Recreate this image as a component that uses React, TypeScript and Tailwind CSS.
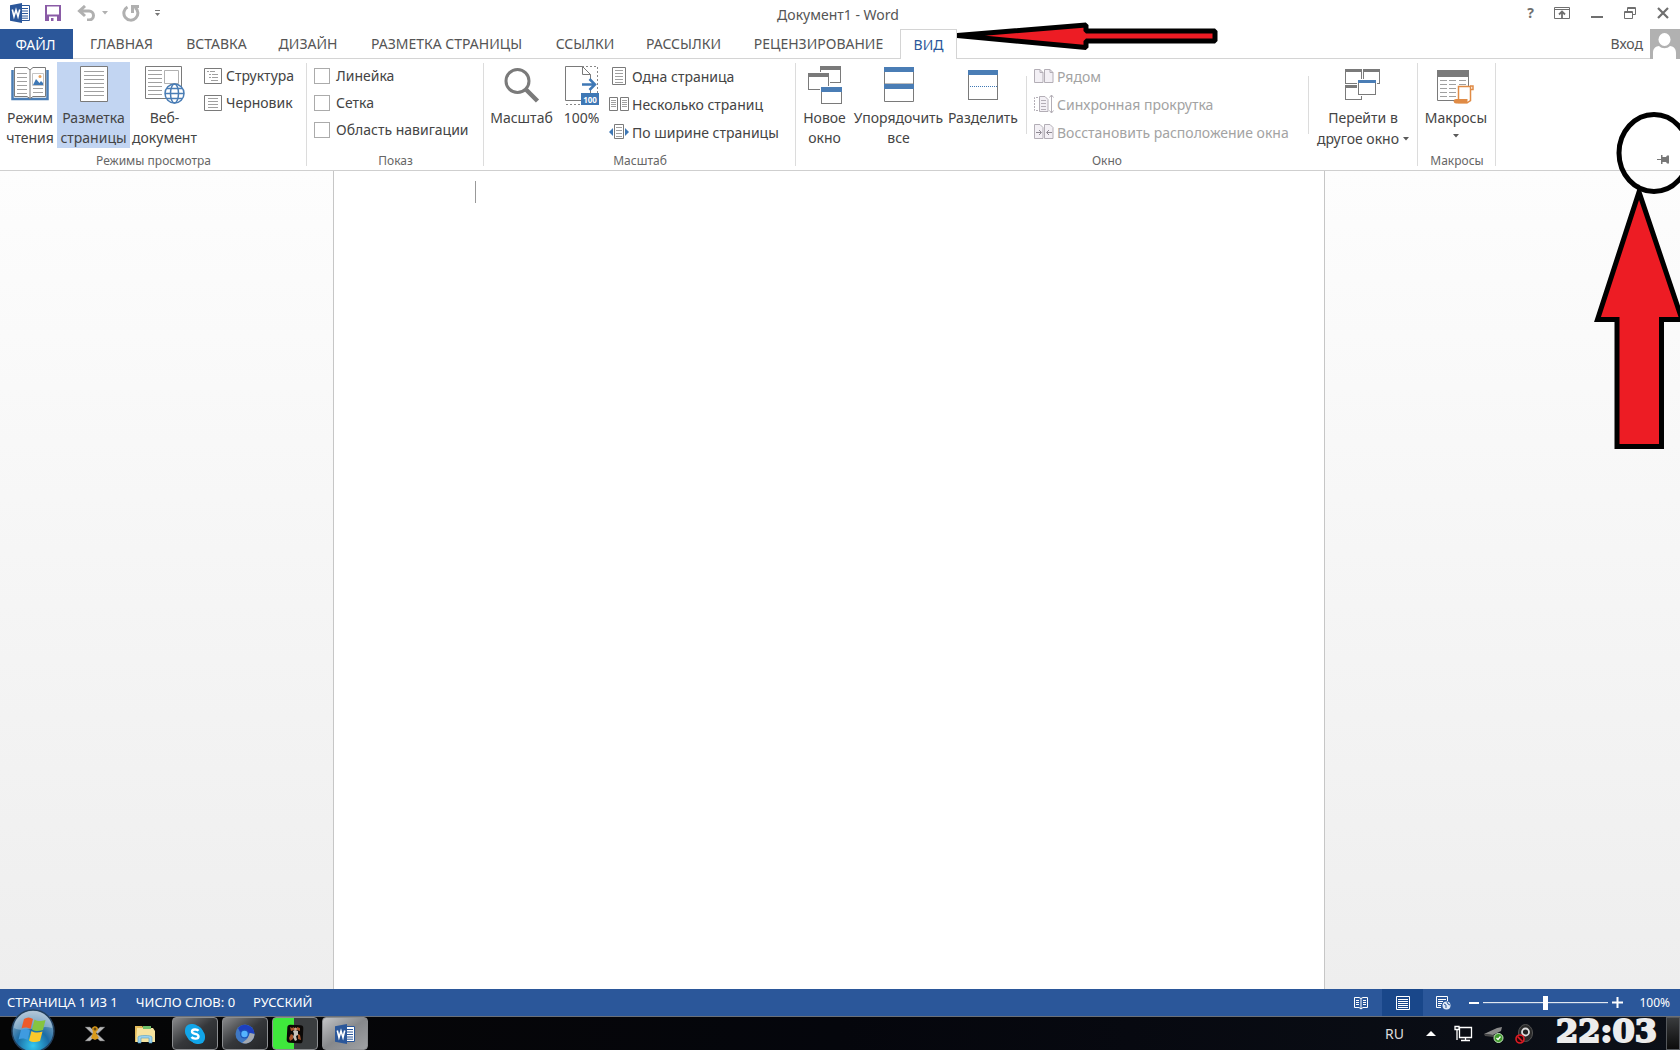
import type { ReactNode } from 'react';

const GRAY = '#7a7a7a';
const BLUE = '#4a7db5';

function Lines({ x, y, w, n, step = 4, color = '#a0a0a0' }: { x: number; y: number; w: number; n: number; step?: number; color?: string }) {
  return (
    <>
      {Array.from({ length: n }, (_, i) => (
        <path key={i} d={`M${x} ${y + i * step + 0.5}h${w}`} stroke={color} />
      ))}
    </>
  );
}

function WordLogo({ size }: { size: number }) {
  return (
    <svg width={size} height={size} viewBox="0 0 20 20" aria-hidden="true">
      <path d="M10 2.5h9.5v15H10z" fill="#fff" stroke="#2b579a" />
      <path d="M11 5.5h7M11 8h7M11 10.5h7M11 13h7M11 15.2h7" stroke="#2b579a" />
      <path d="M0 2.2 12 0v20L0 17.8z" fill="#2b579a" />
      <path d="M2.3 6.5 4 13.5 6 7l2 6.5 1.7-7" fill="none" stroke="#fff" strokeWidth="1.6" />
    </svg>
  );
}

function Caret({ color = '#5a5a5a' }: { color?: string }) {
  return (
    <svg width="6" height="4" viewBox="0 0 6 4" className="inline-block" aria-hidden="true">
      <path d="M0 0h6L3 3.6z" fill={color} />
    </svg>
  );
}

/* ---------- large ribbon icons ---------- */

const ReadIcon = (
  <svg width="38" height="36" viewBox="0 0 38 36" fill="none">
    <path d="M1.500 4v29h35V4" stroke="#4a7db5" strokeWidth="2.500" />
    <path d="M3.500 1.500H16l3 2.500 3-2.500h12.500v29H22l-3 2-3-2H3.500z" fill="#fff" stroke={GRAY} />
    <path d="M19 4v28" stroke={GRAY} />
    <Lines x={6} y={7} w={10} n={6} />
    <path d="M22 22.500h10M22 26.500h10" stroke="#a0a0a0" />
    <path d="M21.500 7.500h11v12h-11z" fill="#fff" stroke="#c4c4c4" />
    <path d="m22 19 3-6 3.500 4 1.500-2 2 2v2z" fill="#3f78b5" />
    <circle cx="29" cy="10.500" r="1.500" fill="#e8a25c" />
  </svg>
);

const PageIcon = (
  <svg width="28" height="36" viewBox="0 0 28 36" fill="none">
    <path d="M.5.5h27v35H.5z" fill="#fff" stroke={GRAY} />
    <Lines x={4} y={5} w={20} n={7} />
  </svg>
);

const WebIcon = (
  <svg width="40" height="38" viewBox="0 0 40 38" fill="none">
    <path d="M.5.5h36v32H.5z" fill="#fff" stroke={GRAY} />
    <Lines x={3} y={4} w={14} n={7} />
    <path d="M19.500 4.500h14v13h-14z" stroke="#b0b0b0" />
    <circle cx="29.500" cy="27.500" r="9.500" fill="#fff" stroke={BLUE} strokeWidth="1.500" />
    <ellipse cx="29.500" cy="27.500" rx="4" ry="9.500" stroke={BLUE} strokeWidth="1.500" />
    <path d="M20 27.500h19M22 22.500h15M22 32.500h15" stroke={BLUE} strokeWidth="1.300" />
  </svg>
);

const ZoomIcon = (
  <svg width="36" height="38" viewBox="0 0 36 38" fill="none" stroke={GRAY}>
    <circle cx="13.500" cy="15" r="11.500" strokeWidth="3" />
    <path d="m21.500 23 12 12" strokeWidth="4.500" />
  </svg>
);

const HundredIcon = (
  <svg width="34" height="40" viewBox="0 0 34 40" fill="none">
    <path d="M1 38.500h16M17 .5h15.500v28" stroke="#888" strokeDasharray="2 2" />
    <path d="M.5 34.500V.5h17l8 8v26z" fill="#fff" stroke={GRAY} />
    <path d="M17.500.500v8h8" stroke={GRAY} />
    <path d="M24 13h5v11h-5z" fill="#fff" />
    <path d="M17 18.500h12M24.500 13l5.500 5.500-5.500 5.500" stroke="#3f78b5" strokeWidth="2.500" />
    <path d="M16 27h18v12H16z" fill="#3f78b5" />
    <text x="25" y="36.500" fill="#fff" fontSize="8" fontWeight="700" textAnchor="middle" fontFamily="Noto Sans">100</text>
  </svg>
);

function Win({ x, y, w, h, color = GRAY, bar = 4 }: { x: number; y: number; w: number; h: number; color?: string; bar?: number }) {
  return (
    <>
      <rect x={x - 1} y={y - 1} width={w + 2} height={h + 2} fill="#fff" />
      <rect x={x + 0.5} y={y + 0.5} width={w - 1} height={h - 1} fill="#fff" stroke={GRAY} />
      <rect x={x} y={y} width={w} height={bar} fill={color} />
    </>
  );
}

const NewWindowIcon = (
  <svg width="34" height="38" viewBox="0 0 34 38">
    <Win x={12} y={0} w={21} h={17} />
    <Win x={0} y={7} w={21} h={17} />
    <Win x={13} y={21} w={21} h={17} color={BLUE} bar={5} />
  </svg>
);

const ArrangeIcon = (
  <svg width="30" height="38" viewBox="0 0 30 38">
    <Win x={0} y={1} w={30} h={18} color={BLUE} bar={5} />
    <path d="M.5 18h29v17.500H.5z" fill="#fff" stroke={GRAY} />
    <path d="M0 18h30v5H0z" fill={BLUE} />
  </svg>
);

const SplitIcon = (
  <svg width="30" height="36" viewBox="0 0 30 36">
    <Win x={0} y={4} w={30} h={30} color={BLUE} bar={5} />
    <path d="M2 20.500h27" stroke="#3f78b5" strokeDasharray="1 1" />
  </svg>
);

const SwitchIcon = (
  <svg width="36" height="36" viewBox="0 0 36 36">
    <Win x={0} y={3} w={17} h={15} bar={3} />
    <Win x={18} y={3} w={17} h={15} bar={3} />
    <Win x={0} y={19} w={17} h={15} bar={3} />
    <Win x={13} y={14} w={18} h={15} color={BLUE} bar={3} />
  </svg>
);

const MacroIcon = (
  <svg width="38" height="38" viewBox="0 0 38 38" fill="none">
    <path d="M.5 4.500h31v30H.5z" fill="#fff" stroke={GRAY} />
    <path d="M0 4h32v7H0z" fill={GRAY} />
    {[3, 12, 22].map((x) => (
      <Lines key={x} x={x} y={14} w={7} n={5} />
    ))}
    <path d="M21.500 20.500h12v14l-3 2H21.500z" fill="#fff" stroke="#e08b45" strokeWidth="1.500" />
    <path d="M33 20h3v3.500h-2.500" stroke="#e08b45" strokeWidth="1.500" />
    <path d="M19 33h11.500v4.500H19a2 2 0 0 1 0-4.500z" fill="#e08b45" />
  </svg>
);

/* ---------- small ribbon icons ---------- */

const OutlineIcon = (
  <svg width="18" height="16" viewBox="0 0 18 16" fill="none">
    <path d="M.5.5h17v15H.5z" stroke={GRAY} />
    <path d="M3 3.500h2m1 0h5M5 6.500h2m1 0h6M5 9.500h2m1 0h6M7 12.500h7" stroke="#a0a0a0" />
  </svg>
);

const DraftIcon = (
  <svg width="18" height="16" viewBox="0 0 18 16" fill="none">
    <path d="M.5.5h17v15H.5z" stroke={GRAY} />
    <Lines x={4} y={3} w={10} n={4} step={3} />
  </svg>
);

const OnePageIcon = (
  <svg width="20" height="18" viewBox="0 0 20 18" fill="none">
    <path d="M3.500.5h13v17h-13z" stroke={GRAY} />
    <Lines x={6} y={3} w={8} n={5} step={3} />
  </svg>
);

const MultiPageIcon = (
  <svg width="20" height="16" viewBox="0 0 20 16" fill="none">
    <path d="M.5 1.500h8v13h-8zM11.500 1.500h8v13h-8z" stroke={GRAY} />
    <Lines x={2} y={4} w={5} n={4} step={2} />
    <Lines x={13} y={4} w={5} n={4} step={2} />
  </svg>
);

const PageWidthIcon = (
  <svg width="20" height="16" viewBox="0 0 20 16" fill="none">
    <path d="M5.500.5h9v14h-9z" stroke={GRAY} />
    <Lines x={7} y={3} w={6} n={4} step={3} />
    <path d="M4 4v8L0 8zM16 4v8l4-4z" fill="#3f78b5" />
  </svg>
);

const SideBySideIcon = (
  <svg width="20" height="16" viewBox="0 0 20 16" fill="#f3f0f5" stroke="#b3aeb6">
    <path d="M.5 1.500H6l3 3v10H.5zM10.500 1.500H16l3 3v10h-8.500z" />
    <path d="M6 1.500v3h3M16 1.500v3h3" fill="none" />
  </svg>
);

const SyncScrollIcon = (
  <svg width="20" height="20" viewBox="0 0 20 20" fill="none" stroke="#b3aeb6">
    <path d="M4 3.500H.5v13H4" strokeDasharray="2 1" />
    <path d="M5.500 2.500H11l3 3v12H5.500z" fill="#f3f0f5" />
    <Lines x={7} y={6} w={5} n={4} step={3} color="#b3aeb6" />
    <path d="M17.500 1v18M15.500 3.500l2-2.500 2 2.500M15.500 16.500l2 2.500 2-2.500" />
  </svg>
);

const ResetIcon = (
  <svg width="20" height="16" viewBox="0 0 20 16" fill="#f3f0f5" stroke="#b3aeb6">
    <path d="M.5.5H6l3 3v11H.5zM10.500.5H16l3 3v11h-8.500z" />
    <path d="M2 8.500h5M5 6l2.500 2.500L5 11M18 8.500h-5M15 6l-2.500 2.500L15 11" fill="none" stroke="#8f8a93" />
  </svg>
);

/* ---------- ribbon parts ---------- */

function BigButton({ icon, lines, width, active, caret }: { icon: ReactNode; lines: string[]; width: string; active?: boolean; caret?: 'inline' | 'below' }) {
  return (
    <button className={`flex h-[86px] shrink-0 flex-col items-center ${width} ${active ? 'bg-[#c2d5f2]' : ''}`}>
      <span className="flex h-[46px] shrink-0 items-start justify-center pt-1">{icon}</span>
      {lines.map((line, i) => (
        <span key={line} className="h-5 shrink-0 whitespace-nowrap leading-5">
          {line}
          {caret === 'inline' && i === lines.length - 1 && <span className="pl-1 align-[1px]"><Caret /></span>}
        </span>
      ))}
      {caret === 'below' && <span className="flex h-4 items-center"><Caret /></span>}
    </button>
  );
}

function SmallButton({ icon, label, disabled, tall }: { icon: ReactNode; label: string; disabled?: boolean; tall?: boolean }) {
  return (
    <button disabled={disabled} className={`flex items-center whitespace-nowrap ${tall ? 'h-7 gap-[3px]' : 'h-[27px] gap-1'} ${disabled ? 'text-[#a3a3a3]' : ''}`}>
      <span className="flex">{icon}</span>
      {label}
    </button>
  );
}

function Group({ title, width, children }: { title: string; width: string; children: ReactNode }) {
  return (
    <section className={`relative flex shrink-0 flex-col justify-between pt-[3px] ${width}`}>
      <div className="flex">{children}</div>
      <h2 className="pb-px text-center text-[12px] leading-4 text-[#666]">{title}</h2>
      <span className="absolute right-0 top-1 bottom-1 w-px bg-[#dcdcdc]" />
    </section>
  );
}

const tabs = [
  { label: 'ГЛАВНАЯ', width: 'w-[97px]' },
  { label: 'ВСТАВКА', width: 'w-[93px]' },
  { label: 'ДИЗАЙН', width: 'w-[90px]' },
  { label: 'РАЗМЕТКА СТРАНИЦЫ', width: 'w-[187px]' },
  { label: 'ССЫЛКИ', width: 'w-[90px]' },
  { label: 'РАССЫЛКИ', width: 'w-[107px]' },
  { label: 'РЕЦЕНЗИРОВАНИЕ', width: 'w-[163px]' },
];

function TitleBar() {
  return (
    <header className="grid h-[29px] grid-cols-[1fr_auto_1fr] items-center">
      <div className="flex items-center pl-2.5 pb-1">
        <WordLogo size={20} />
        <button aria-label="Сохранить" className="ml-[15px]">
          <svg width="16" height="16" viewBox="0 0 16 16">
            <path d="M0 0h16v16H0z" fill="#8a5ba6" />
            <path d="M2 1.500h12v8H2zM4 11.500h8V16H4z" fill="#fff" />
            <path d="M6 13h2.500v3H6z" fill="#8a5ba6" />
          </svg>
        </button>
        <button aria-label="Отменить" className="ml-4 flex items-center gap-1.5">
          <svg width="19" height="16" viewBox="0 0 19 16" fill="none" stroke="#b0b0b0" strokeWidth="3">
            <path d="M8 1 2.500 6 8 11M3 6h9a4.500 4.500 0 0 1 0 9h-2" />
          </svg>
          <Caret color="#b0b0b0" />
        </button>
        <button aria-label="Повторить" className="ml-3.5">
          <svg width="18" height="18" viewBox="0 0 18 18" fill="none" stroke="#b0b0b0" strokeWidth="3">
            <path d="M5.500 3a7 7 0 1 0 7.500.5" />
            <path d="M10.500 9V2.500H17" />
          </svg>
        </button>
        <button aria-label="Настройка панели" className="ml-3.5">
          <svg width="7" height="8" viewBox="0 0 7 8" fill="#777">
            <path d="M1 1h5v1H1zM1 4h5L3.500 7z" />
          </svg>
        </button>
      </div>
      <h1 className="pr-1 text-[14px] leading-5 text-[#555]">Документ1 - Word</h1>
      <div className="flex items-center justify-end gap-[21px] pr-[11px] pb-[3px] text-[#6f6f6f]">
        <div className="flex items-center gap-5">
          <button aria-label="Справка" className="text-[14px] font-bold leading-5">?</button>
          <button aria-label="Параметры ленты">
            <svg width="16" height="12" viewBox="0 0 16 12" fill="none" stroke="currentColor">
              <path d="M.5.5h15v11H.5zM0 2.500h16" />
              <path d="M8 11V5M5 7.500 8 4.500l3 3" strokeWidth="1.800" />
            </svg>
          </button>
        </div>
        <button aria-label="Свернуть">
          <svg width="12" height="12" viewBox="0 0 12 12"><path d="M0 9h12v2H0z" fill="currentColor" /></svg>
        </button>
        <button aria-label="Восстановить">
          <svg width="12" height="12" viewBox="0 0 12 12" fill="none" stroke="currentColor">
            <path d="M3.500 4V.5h8v7H9M3 1.500h9M.5 4.500h8v7h-8zM0 5.500h9" />
          </svg>
        </button>
        <button aria-label="Закрыть">
          <svg width="12" height="12" viewBox="0 0 12 12" stroke="currentColor" strokeWidth="2.200"><path d="m1 1 10 10M11 1 1 11" /></svg>
        </button>
      </div>
    </header>
  );
}

function TabRow() {
  return (
    <nav className="flex h-[30px] text-[14px] text-[#555]">
      <button className="w-[73px] bg-[#2b579a] pr-0.5 text-white">ФАЙЛ</button>
      <div className="flex border-b border-[#d4d4d4]">
        {tabs.map((t) => (
          <button key={t.label} className={`whitespace-nowrap ${t.width}`}>{t.label}</button>
        ))}
      </div>
      <div className="relative">
        <button className="h-full w-[57px] border-x border-t border-[#d4d4d4] text-[#2b579a]">ВИД</button>
        <svg width="262" height="28" viewBox="0 0 262 28" className="absolute left-full -top-[7px] z-10" aria-hidden="true">
          <path d="M-1 13.500 129 3v6h129v10H129v6.500z" fill="#ed1c24" stroke="#000" strokeWidth="5" strokeLinejoin="bevel" />
        </svg>
      </div>
      <div className="flex flex-1 items-center justify-end border-b border-[#d4d4d4]">
        <button>Вход</button>
      </div>
      <svg width="37" height="30" viewBox="0 0 37 30" aria-hidden="true">
        <path d="M0 29.500h7" stroke="#d4d4d4" />
        <path d="M7 0h30v30H7z" fill="#b1b1b1" />
        <ellipse cx="21.500" cy="10.500" rx="6" ry="6.500" fill="#fff" />
        <path d="M10 30V24c0-5 3-6.500 6-7 3 3 8 3 11 0 3 .5 6 2 6 7v6z" fill="#fff" />
      </svg>
    </nav>
  );
}

function Ribbon() {
  return (
    <div className="flex h-28 border-b border-[#cfcfcf] text-[14px] text-[#444]">
      <Group title="Режимы просмотра" width="w-[307px]">
        <BigButton icon={ReadIcon} lines={['Режим', 'чтения']} width="w-[57px] pl-[3px]" />
        <BigButton icon={PageIcon} lines={['Разметка', 'страницы']} width="w-[73px]" active />
        <BigButton icon={WebIcon} lines={['Веб-', 'документ']} width="w-[69px]" />
        <div className="pl-[5px]">
          <SmallButton icon={OutlineIcon} label="Структура" />
          <SmallButton icon={DraftIcon} label="Черновик" />
        </div>
      </Group>
      <Group title="Показ" width="w-[177px]">
        <div className="pl-[7px]">
          {['Линейка', 'Сетка', 'Область навигации'].map((label) => (
            <label key={label} className="flex h-[27px] items-center gap-1.5 whitespace-nowrap">
              <input type="checkbox" className="size-4 appearance-none border border-[#ababab] bg-white" />
              {label}
            </label>
          ))}
        </div>
      </Group>
      <Group title="Масштаб" width="w-[312px]">
        <BigButton icon={ZoomIcon} lines={['Масштаб']} width="w-[75px]" />
        <BigButton icon={HundredIcon} lines={['100%']} width="w-[45px]" />
        <div className="pl-[5px]">
          <SmallButton tall icon={OnePageIcon} label="Одна страница" />
          <SmallButton tall icon={MultiPageIcon} label="Несколько страниц" />
          <SmallButton tall icon={PageWidthIcon} label="По ширине страницы" />
        </div>
      </Group>
      <Group title="Окно" width="w-[622px]">
        <BigButton icon={NewWindowIcon} lines={['Новое', 'окно']} width="w-[57px]" />
        <BigButton icon={ArrangeIcon} lines={['Упорядочить', 'все']} width="w-[91px]" />
        <BigButton icon={SplitIcon} lines={['Разделить']} width="w-[78px]" />
        <div className="my-3.5 ml-1 w-[283px] border-x border-[#dcdcdc] pl-[7px]">
          <div className="-my-3.5">
            <SmallButton tall disabled icon={SideBySideIcon} label="Рядом" />
            <SmallButton tall disabled icon={SyncScrollIcon} label="Синхронная прокрутка" />
            <SmallButton tall disabled icon={ResetIcon} label="Восстановить расположение окна" />
          </div>
        </div>
        <BigButton icon={SwitchIcon} lines={['Перейти в', 'другое окно']} width="w-[108px]" caret="inline" />
      </Group>
      <Group title="Макросы" width="w-[78px]">
        <BigButton icon={MacroIcon} lines={['Макросы']} width="w-[76px]" caret="below" />
      </Group>
      <button aria-label="Закрепить ленту" className="ml-auto self-end pr-[11px] pb-1.5">
        <svg width="12" height="9" viewBox="0 0 12 9" fill="#777">
          <path d="M0 4h4v1H0zM4 0h1.500v2H9l1-1.500h2v8h-2L9 7H5.500v2H4z" />
        </svg>
      </button>
    </div>
  );
}

function StatusBar() {
  return (
    <footer className="flex h-[27px] items-center bg-[#2b579a] text-[13px] text-white">
      <div className="flex gap-[18px] pl-[7px]">
        <span>СТРАНИЦА 1 ИЗ 1</span>
        <span>ЧИСЛО СЛОВ: 0</span>
        <span>РУССКИЙ</span>
      </div>
      <div className="ml-auto flex h-full items-center">
        <button aria-label="Режим чтения" className="px-3.5">
          <svg width="14" height="14" viewBox="0 0 14 14" fill="none" stroke="#fff">
            <path d="M.5 1.500H5l2 1 2-1h4.500v10H9l-2 1.500-2-1.500H.5zM7 2v11M2 4.500h3M2 6.500h3M2 8.500h3M9 4.500h3M9 6.500h3M9 8.500h3" />
          </svg>
        </button>
        <button aria-label="Разметка страницы" className="flex h-full w-[41px] items-center justify-center bg-[#19478a]">
          <svg width="14" height="14" viewBox="0 0 14 14" fill="none" stroke="#fff">
            <path d="M.5.5h13v13H.5zM2 3.500h10M2 5.500h10M2 7.500h10M2 9.500h10M2 11.500h10" />
          </svg>
        </button>
        <button aria-label="Веб-документ" className="pl-[13px] pr-[18px]">
          <svg width="15" height="14" viewBox="0 0 15 14" fill="none" stroke="#fff">
            <path d="M5 11.500H.5V.5h11V5M2 3.500h8M2 5.500h5M2 7.500h4M2 9.500h3" />
            <circle cx="10.500" cy="9.500" r="4" fill="#dfe8f5" stroke="none" />
            <path d="m8 8 2 1v3M11 6l1 2 2 1" stroke="#2b579a" />
          </svg>
        </button>
        <button aria-label="Уменьшить">
          <svg width="10" height="10" viewBox="0 0 10 10"><path d="M0 4h10v2H0z" fill="#fff" /></svg>
        </button>
        <input
          type="range"
          aria-label="Масштаб"
          defaultValue={50}
          className="mx-1 h-3.5 w-[125px] appearance-none bg-linear-to-b from-transparent from-45% via-white via-45% to-transparent to-55% [&::-webkit-slider-thumb]:h-3.5 [&::-webkit-slider-thumb]:w-[5px] [&::-webkit-slider-thumb]:appearance-none [&::-webkit-slider-thumb]:bg-white"
        />
        <button aria-label="Увеличить">
          <svg width="11" height="11" viewBox="0 0 11 11"><path d="M0 4.500h11v2H0zM4.500 0h2v11h-2z" fill="#fff" /></svg>
        </button>
        <span className="w-[57px] pr-2.5 text-right text-[12px]">100%</span>
      </div>
    </footer>
  );
}

function TaskButton({ label, look, children }: { label: string; look: string; children: ReactNode }) {
  return (
    <button aria-label={label} className={`flex h-full w-[46px] items-center justify-center rounded-sm border border-[#8b8d90] ${look}`}>
      {children}
    </button>
  );
}

function TaskBar() {
  return (
    <div className="flex h-[34px] items-center border-t border-[#6b7078] bg-linear-to-r from-[#050505] via-[#05060c] to-[#0c1018]">
      <button aria-label="Пуск" className="relative z-10 -mt-2 ml-[11px]">
        <svg width="44" height="42" viewBox="0 0 44 42">
          <defs>
            <radialGradient id="orb" cx="50%" cy="85%" r="85%">
              <stop offset="0" stopColor="#35c8f0" />
              <stop offset=".45" stopColor="#1b6ca5" />
              <stop offset="1" stopColor="#9bb3c8" />
            </radialGradient>
          </defs>
          <circle cx="22" cy="22" r="21" fill="url(#orb)" stroke="#23405e" strokeWidth="1.500" />
          <path d="M3 19a19 17 0 0 1 38 0c-12-4-26 6-38 0z" fill="#fff" opacity=".3" />
          <path d="M13 10c3-2 6-2 9 0l-2.500 10c-3-2-6-2-9-.5z" fill="#ee5a28" />
          <path d="M23.500 10.500c3 2 6 2 11 .5l-2.500 10c-4 1.500-8 1.500-11-.5z" fill="#86c440" />
          <path d="M10 21c3-1.500 6-1.500 9 .5L16.500 31c-3-2-6-2-9-.5z" fill="#3f9be0" />
          <path d="M20.500 22c3 2 7 2 11 .5L29 32c-4 1.500-8 1.500-11-.5z" fill="#fbc92b" />
        </svg>
      </button>
      <button aria-label="Игра" className="ml-[29px]">
        <svg width="22" height="20" viewBox="0 0 22 20" fill="none">
          <path d="M1 3h5l15 14h-5zM21 3h-5L1 17h5z" fill="#b9b9b9" stroke="#555" strokeWidth=".500" />
          <path d="M8 4c2-3 6-2 6 1 0 2-2 2-2 4l3 5-4 2-4-2 2-5z" fill="#d99a1c" />
          <circle cx="11" cy="5" r="1.500" fill="#6b4808" />
        </svg>
      </button>
      <button aria-label="Проводник" className="ml-7">
        <svg width="22" height="20" viewBox="0 0 22 20">
          <path d="M1 2h7l2 2h9v14H1z" fill="#e3bb5a" />
          <path d="M3 4h16l2 3v11H2z" fill="#f6e3a0" />
          <path d="M9 2h8v3H9z" fill="#6fbf6a" />
          <path d="M4 19v-6c0-2 14-2 14 0v6h-3v-5H7v5z" fill="#9dd3ee" stroke="#4d9cc4" strokeWidth=".600" />
        </svg>
      </button>
      <div className="ml-4 flex h-full gap-1">
        <TaskButton label="Skype" look="bg-linear-to-br from-[#8a8b8d] via-[#35373a] to-[#232528]">
          <svg width="20" height="20" viewBox="0 0 20 20">
            <rect width="14" height="14" rx="6" fill="#12a5e8" />
            <rect x="6" y="6" width="14" height="14" rx="6" fill="#12a5e8" />
            <circle cx="10" cy="10" r="8.500" fill="#12a5e8" />
            <path d="M13.500 6.800C12 4.800 7 5 7 7.700c0 3 6.500 1.500 6.500 4.700 0 2.800-5.500 2.800-7 .6" fill="none" stroke="#fff" strokeWidth="2.400" />
          </svg>
        </TaskButton>
        <TaskButton label="Браузер" look="bg-linear-to-br from-[#8a8b8d] via-[#35373a] to-[#232528]">
          <svg width="20" height="20" viewBox="0 0 20 20">
            <circle cx="10" cy="10" r="9.500" fill="#3f78c4" />
            <path d="M3 4A9.500 9.500 0 0 1 19.500 10L14 9l-4-3-5 2z" fill="#1c3fc0" />
            <path d="M19.500 10A9.500 9.500 0 0 1 7 19l5-4 3-6z" fill="#a3a8af" />
            <circle cx="9.500" cy="10" r="4.500" fill="#1d55b8" />
            <circle cx="9.500" cy="10" r="3.200" fill="#55b4ff" />
          </svg>
        </TaskButton>
        <TaskButton label="Загрузка" look="bg-linear-to-r from-[#3fe83c] from-48% to-[#3a3d3f] to-48%">
          <svg width="18" height="20" viewBox="0 0 18 20">
            <rect x="1" y="1" width="16" height="18" rx="3" fill="#0b0806" transform="rotate(3 9 10)" />
            <path d="m4 3 2 1 2-1v3l-3 1zM11 3l3 1v3l-3-1zM3 14l2-4 2 1v4l-3 2zM12 10l2 1 1 5-3-1z" fill="#a8552c" />
            <path d="m7 7 2-1 3 1v4l-2 1 1 4-2 1-2-4 1-3z" fill="#c9c4bd" />
            <circle cx="9.500" cy="5" r="1.500" fill="#d8a184" />
          </svg>
        </TaskButton>
        <TaskButton label="Word" look="bg-linear-to-br from-[#c4c5c7] via-[#86888b] to-[#a0a2a5]">
          <WordLogo size={20} />
        </TaskButton>
      </div>
      <div className="ml-auto flex h-full items-center text-white">
        <span className="text-[14px] leading-5 text-[#dcdcdc]">RU</span>
        <button aria-label="Скрытые значки" className="ml-[22px]">
          <svg width="10" height="5" viewBox="0 0 10 5"><path d="M0 5h10L5 0z" fill="#fff" /></svg>
        </button>
        <svg width="19" height="17" viewBox="0 0 19 17" fill="none" stroke="#fff" className="ml-[18px]" aria-hidden="true">
          <path d="M1 1.500h4v3H1zM3 4.500V15M5.500 2.500h12v10h-12zM11.500 12v3M7 15.500h9" strokeWidth="1.300" />
        </svg>
        <svg width="20" height="18" viewBox="0 0 20 18" className="ml-[11px]" aria-hidden="true">
          <path d="M0 9 13 3l5-1-1 4-8 4z" fill="#8a8a8a" />
          <path d="m0 9 9 1 3-1v2l-3 1-8-1z" fill="#4a4a4a" />
          <circle cx="14.500" cy="13" r="4.500" fill="#3f9a2c" stroke="#c9e8c0" />
          <path d="m12.500 13 1.500 1.500 2.500-3" fill="none" stroke="#fff" strokeWidth="1.300" />
        </svg>
        <svg width="18" height="20" viewBox="0 0 18 20" className="ml-[11px]" aria-hidden="true">
          <ellipse cx="10.500" cy="9" rx="7" ry="8.500" fill="#2a2a2a" stroke="#555" />
          <circle cx="10.500" cy="8" r="3.500" fill="#222" stroke="#ddd" strokeWidth="1.800" />
          <circle cx="5" cy="15" r="4" fill="#2b0808" stroke="#e01b24" strokeWidth="1.600" />
          <path d="m2.500 12.500 5 5" stroke="#e01b24" strokeWidth="1.600" />
        </svg>
        <time className="ml-5 w-[107px] self-start whitespace-nowrap text-center font-['DejaVu_Serif',serif] text-[32px] font-bold leading-7 text-[#ececec] [-webkit-text-stroke:2px_#ececec]">22:03</time>
        <button aria-label="Показать рабочий стол" className="ml-1.5 h-full w-3.5 border border-[#55585c] bg-linear-to-b from-[#3a3c3e] to-[#0c0c0c]" />
      </div>
    </div>
  );
}

export default function App() {
  return (
    <div className="relative flex min-h-screen flex-col overflow-hidden bg-white font-['Noto_Sans',sans-serif]">
      <TitleBar />
      <TabRow />
      <Ribbon />
      <main className="flex flex-1 justify-center bg-linear-to-b from-[#fdfdfd] to-[#eeeeee] pr-[22px]">
        <article className="w-[992px] border-x border-[#c6c6c6] bg-white pl-[141px] pt-2.5">
          <div className="h-[22px] w-px bg-[#999]" />
        </article>
      </main>
      <StatusBar />
      <TaskBar />
      <svg width="90" height="342" viewBox="0 0 90 342" fill="none" stroke="#000" strokeWidth="5" className="absolute right-0 top-[108px]" aria-hidden="true">
        <path d="M49 84 7.500 211.500H27V338.500h44.500v-127H92z" fill="#ed1c24" />
        <ellipse cx="64" cy="45" rx="35" ry="38.500" />
      </svg>
    </div>
  );
}
